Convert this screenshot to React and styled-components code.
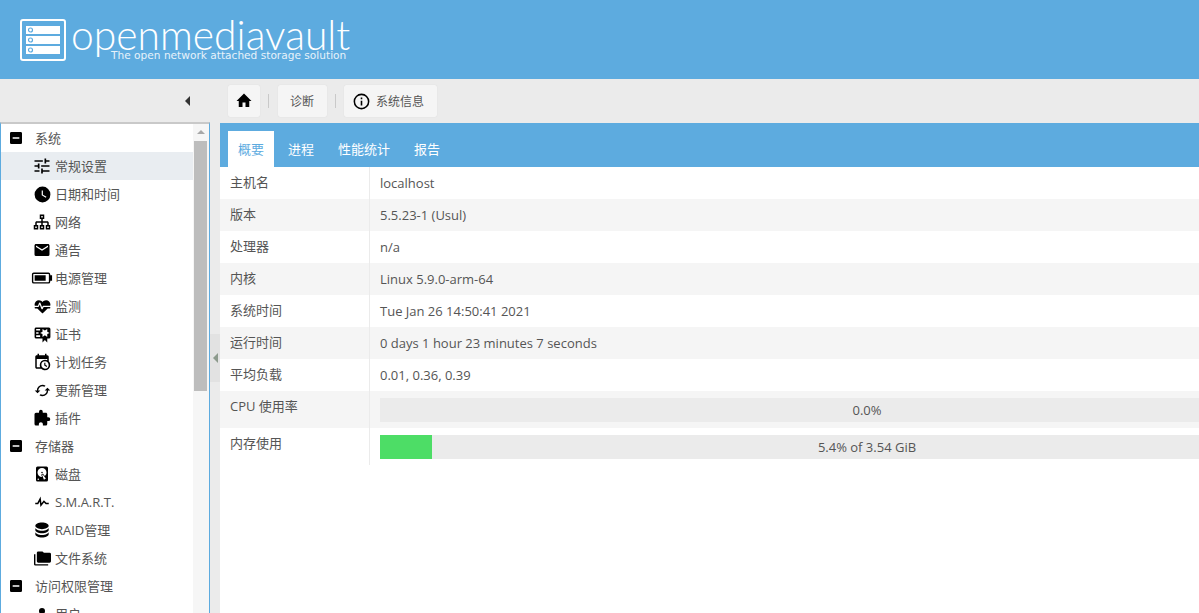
import React from 'react';
import styled, { createGlobalStyle } from 'styled-components';

const ICONS = {
  minusBox: 'M17,13H7V11H17M19,3H5C3.89,3 3,3.89 3,5V19A2,2 0 0,0 5,21H19A2,2 0 0,0 21,19V5C21,3.89 20.1,3 19,3Z',
  tune: 'M3,17V19H9V17H3M3,5V7H13V5H3M13,21V19H21V17H13V15H11V21H13M7,9V11H3V13H7V15H9V9H7M21,13V11H11V13H21M15,9H17V7H21V5H17V3H15V9Z',
  clock: 'M12,2A10,10 0 0,0 2,12A10,10 0 0,0 12,22A10,10 0 0,0 22,12A10,10 0 0,0 12,2M16.2,16.2L11,13V7H12.5V12.2L17,14.9L16.2,16.2Z',
  lan: 'M9,2V8H11V11H5C3.9,11 3,11.9 3,13V16H1V22H7V16H5V13H11V16H9V22H15V16H13V13H19V16H17V22H23V16H21V13C21,11.9 20.1,11 19,11H13V8H15V2H9M11,4H13V6H11V4M3,18H5V20H3V18M11,18H13V20H11V18M19,18H21V20H19V18Z',
  email: 'M20,8L12,13L4,8V6L12,11L20,6M20,4H4C2.89,4 2,4.89 2,6V18A2,2 0 0,0 4,20H20A2,2 0 0,0 22,18V6C22,4.89 21.1,4 20,4Z',
  battery: 'M3,6H19A2,2 0 0,1 21,8V9H23V15H21V16A2,2 0 0,1 19,18H3A2,2 0 0,1 1,16V8A2,2 0 0,1 3,6M3,7.5A0.5,0.5 0 0,0 2.5,8V16A0.5,0.5 0 0,0 3,16.5H19A0.5,0.5 0 0,0 19.5,16V8A0.5,0.5 0 0,0 19,7.5H3M4,9H16V15H4V9Z',
  heartPulse: 'M7.5,4A5.5,5.5 0 0,0 2,9.5C2,10 2.09,10.5 2.22,11H6.3L7.57,7.63C7.87,6.83 9.05,6.75 9.43,7.63L11.5,13L12.09,11.58C12.22,11.25 12.57,11 13,11H21.78C21.91,10.5 22,10 22,9.5A5.5,5.5 0 0,0 16.5,4C14.64,4 13,4.93 12,6.34C11,4.93 9.36,4 7.5,4V4M3,12.5A1,1 0 0,0 2,13.5A1,1 0 0,0 3,14.5H5.44L11,20C12,20.9 12,20.9 13,20L18.56,14.5H21A1,1 0 0,0 22,13.5A1,1 0 0,0 21,12.5H13.4L12.47,14.8C12.07,15.81 10.92,15.67 10.55,14.83L8.5,9.5L7.54,11.83C7.39,12.27 7.05,12.5 6.5,12.5H3Z',
  certificate: 'M4,3C2.89,3 2,3.89 2,5V15A2,2 0 0,0 4,17H12V22L15,19L18,22V17H20A2,2 0 0,0 22,15V8L22,6V5A2,2 0 0,0 20,3H16V3H4M12,5L15,7L18,5V8.5L21,10L18,11.5V15L15,13L12,15V11.5L9,10L12,8.5V5M4,5H9V7H4V5M4,9H7V11H4V9M4,13H9V15H4V13Z',
  calendarClock: 'M15,13H16.5V15.82L18.94,17.23L18.19,18.53L15,16.69V13M19,8H5V19H9.67C9.24,18.09 9,17.07 9,16A7,7 0 0,1 16,9C17.07,9 18.09,9.24 19,9.67V8M5,21C3.89,21 3,20.1 3,19V5C3,3.89 3.89,3 5,3H6V1H8V3H16V1H18V3H19A2,2 0 0,1 21,5V11.1C22.24,12.36 23,14.09 23,16A7,7 0 0,1 16,23C14.09,23 12.36,22.24 11.1,21H5M16,11.15A4.85,4.85 0 0,0 11.15,16C11.15,18.68 13.32,20.85 16,20.85A4.85,4.85 0 0,0 20.85,16C20.85,13.32 18.68,11.15 16,11.15Z',
  cached: 'M19,8L15,12H18A6,6 0 0,1 12,18C11,18 10.03,17.75 9.2,17.3L7.74,18.76C8.97,19.54 10.43,20 12,20A8,8 0 0,0 20,12H23M6,12A6,6 0 0,1 12,6C13,6 13.97,6.25 14.8,6.7L16.26,5.24C15.03,4.46 13.57,4 12,4A8,8 0 0,0 4,12H1L5,16L9,12',
  puzzle: 'M20.5,11H19V7C19,5.89 18.1,5 17,5H13V3.5A2.5,2.5 0 0,0 10.5,1A2.5,2.5 0 0,0 8,3.5V5H4A2,2 0 0,0 2,7V20A2,2 0 0,0 4,22H7.8V20.5C7.8,19 9,17.8 10.5,17.8C12,17.8 13.2,19 13.2,20.5V22H17A2,2 0 0,0 19,20V16H20.5A2.5,2.5 0 0,0 23,13.5A2.5,2.5 0 0,0 20.5,11Z',
  harddisk: 'M6,2H18A2,2 0 0,1 20,4V20A2,2 0 0,1 18,22H6A2,2 0 0,1 4,20V4A2,2 0 0,1 6,2M12,4A6,6 0 0,0 6,10C6,13.31 8.69,16 12.1,16L11.22,13.77C10.95,13.29 11.11,12.68 11.59,12.4L12.45,11.9C12.93,11.63 13.54,11.79 13.82,12.27L15.74,14.69C17.12,13.59 18,11.9 18,10A6,6 0 0,0 12,4M12,9A1,1 0 0,1 13,10A1,1 0 0,1 12,11A1,1 0 0,1 11,10A1,1 0 0,1 12,9M7,18A1,1 0 0,0 6,19A1,1 0 0,0 7,20A1,1 0 0,0 8,19A1,1 0 0,0 7,18M12.09,13.27L14.58,19.58L17.17,18.08L12.95,12.77L12.09,13.27Z',
  pulse: 'M3,13H5.79L10.1,4.79L11.28,13.75L14.5,9.66L17.83,13H21V15H17L14.67,12.67L9.92,18.73L8.94,11.31L7,15H3V13Z',
  database: 'M12,3C7.58,3 4,4.79 4,7C4,9.21 7.58,11 12,11C16.42,11 20,9.21 20,7C20,4.79 16.42,3 12,3M4,9V12C4,14.21 7.58,16 12,16C16.42,16 20,14.21 20,12V9C20,11.21 16.42,13 12,13C7.58,13 4,11.21 4,9M4,14V17C4,19.21 7.58,21 12,21C16.42,21 20,19.21 20,17V14C20,16.21 16.42,18 12,18C7.58,18 4,16.21 4,14Z',
  folders: 'M22,4H14L12,2H6A2,2 0 0,0 4,4V16A2,2 0 0,0 6,18H22A2,2 0 0,0 24,16V6A2,2 0 0,0 22,4M2,6H0V20A2,2 0 0,0 2,22H20V20H2V6Z',
  account: 'M12,4A4,4 0 0,1 16,8A4,4 0 0,1 12,12A4,4 0 0,1 8,8A4,4 0 0,1 12,4M12,14C16.42,14 20,15.79 20,18V20H4V18C4,15.79 7.58,14 12,14Z',
  home: 'M10,20V14H14V20H19V12H22L12,2L2,12H5V20H10Z',
  info: 'M11,9H13V7H11M12,20C7.59,20 4,16.41 4,12C4,7.59 7.59,4 12,4C16.41,4 20,7.59 20,12C20,16.41 16.41,20 12,20M12,2A10,10 0 0,0 2,12A10,10 0 0,0 12,22A10,10 0 0,0 22,12A10,10 0 0,0 12,2M11,17H13V11H11V17Z',
};

const NAV = [
  { type: 'group', label: '系统' },
  { icon: 'tune', label: '常规设置', size: 20, active: true },
  { icon: 'clock', label: '日期和时间', size: 19 },
  { icon: 'lan', label: '网络', size: 18 },
  { icon: 'email', label: '通告', size: 18 },
  { icon: 'battery', label: '电源管理', size: 22 },
  { icon: 'heartPulse', label: '监测', size: 19 },
  { icon: 'certificate', label: '证书', size: 19 },
  { icon: 'calendarClock', label: '计划任务', size: 18 },
  { icon: 'cached', label: '更新管理', size: 17 },
  { icon: 'puzzle', label: '插件', size: 18 },
  { type: 'group', label: '存储器' },
  { icon: 'harddisk', label: '磁盘', size: 18 },
  { icon: 'pulse', label: 'S.M.A.R.T.', size: 18 },
  { icon: 'database', label: 'RAID管理', size: 20 },
  { icon: 'folders', label: '文件系统', size: 17 },
  { type: 'group', label: '访问权限管理' },
  { icon: 'account', label: '用户', size: 18 },
];

const INFO_ROWS = [
  ['主机名', 'localhost'],
  ['版本', '5.5.23-1 (Usul)'],
  ['处理器', 'n/a'],
  ['内核', 'Linux 5.9.0-arm-64'],
  ['系统时间', 'Tue Jan 26 14:50:41 2021'],
  ['运行时间', '0 days 1 hour 23 minutes 7 seconds'],
  ['平均负载', '0.01, 0.36, 0.39'],
];

const TABS = ['概要', '进程', '性能统计', '报告'];

const GlobalStyle = createGlobalStyle`
  html, body {
    margin: 0;
    padding: 0;
    height: 100%;
    overflow: hidden;
  }
  body {
    font-family: "Open Sans", "Noto Sans CJK SC", sans-serif;
    font-size: 13px;
    color: #555;
    background: #ebebeb;
  }
`;

const Page = styled.div`
  display: flex;
  flex-direction: column;
  height: 613px;
  overflow: hidden;
`;

const Header = styled.header`
  display: flex;
  align-items: flex-start;
  gap: 5px;
  height: 79px;
  flex: none;
  padding: 19px 0 0 20px;
  box-sizing: border-box;
  background: #5dabdf;
  color: #fff;
`;

const Brand = styled.div`
  display: flex;
  flex-direction: column;
  width: 290px;
`;

const BrandName = styled.div`
  font-family: "Lato", sans-serif;
  font-weight: 300;
  font-size: 40.8px;
  line-height: 32px;
  height: 30px;
`;

const BrandTag = styled.div`
  font-family: "DejaVu Sans", sans-serif;
  font-size: 10.6px;
  line-height: 12px;
  margin-left: 40px;
  opacity: 0.85;
`;

const Toolbar = styled.div`
  display: flex;
  align-items: center;
  height: 44px;
  flex: none;
`;

const CollapseSlot = styled.div`
  display: flex;
  justify-content: flex-end;
  width: 228px;
  padding-right: 38px;
  box-sizing: border-box;
`;

const ToolButton = styled.div`
  display: flex;
  align-items: center;
  justify-content: center;
  gap: 5px;
  width: ${(p) => p.$width}px;
  height: 32px;
  padding-right: ${(p) => p.$shift || 0}px;
  box-sizing: border-box;
  background: #f5f5f5;
  border-radius: 2px;
  box-shadow: 0 0 1px rgba(0, 0, 0, 0.12);
  font-size: 12px;
`;

const ToolSep = styled.div`
  width: 1px;
  height: 14px;
  margin: 0 ${(p) => p.$right}px 0 8px;
  background: #c9c9c9;
`;

const Body = styled.div`
  display: flex;
  flex: 1;
  min-height: 0;
`;

const Sidebar = styled.aside`
  display: flex;
  width: 210px;
  flex: none;
  margin-top: -1px;
  box-sizing: border-box;
  background: #fff;
  border-left: 1px solid #5dabdf;
  border-right: 1px solid #5dabdf;
  border-top: 2px solid #c9c9c9;
  overflow: hidden;
`;

const NavList = styled.div`
  flex: 1;
  min-width: 0;
`;

const NavRow = styled.div`
  display: flex;
  align-items: center;
  height: 28px;
  padding: 0 0 0 ${(p) => (p.$group ? 7 : 31)}px;
  background: ${(p) => (p.$active ? '#e9edf1' : 'transparent')};
  white-space: nowrap;
`;

const NavIconSlot = styled.span`
  display: flex;
  align-items: center;
  justify-content: center;
  width: ${(p) => (p.$group ? 16 : 20)}px;
  flex: none;
  margin-right: ${(p) => (p.$group ? 11 : 3)}px;
`;

const NavLabel = styled.span`
  line-height: 28px;
`;

const Scrollbar = styled.div`
  display: flex;
  flex-direction: column;
  align-items: center;
  width: 16px;
  flex: none;
  background: #f6f6f6;
`;

const ScrollArrow = styled.div`
  width: 0;
  height: 0;
  margin: 6px 0 7px;
  border-left: 4px solid transparent;
  border-right: 4px solid transparent;
  border-bottom: 4px solid #a8a8a8;
`;

const ScrollThumb = styled.div`
  width: 13px;
  height: 250px;
  margin-left: -1px;
  background: #bdbdbd;
`;

const Splitter = styled.div`
  display: flex;
  align-items: center;
  width: 10px;
  flex: none;
  padding-bottom: 20px;
  box-sizing: border-box;
`;

const SplitHandle = styled.div`
  display: flex;
  align-items: center;
  justify-content: center;
  width: 10px;
  height: 48px;
  background: #e2e2e2;
`;

const TriangleLeft = styled.div`
  width: 0;
  height: 0;
  border-top: ${(p) => p.$h}px solid transparent;
  border-bottom: ${(p) => p.$h}px solid transparent;
  border-right: ${(p) => p.$w}px solid ${(p) => p.$color};
`;

const Main = styled.main`
  flex: 1;
  min-width: 0;
  background: #fff;
  overflow: hidden;
`;

const TabBar = styled.div`
  display: flex;
  gap: 4px;
  height: 44px;
  padding: 8px 0 0 8px;
  box-sizing: border-box;
  background: #5dabdf;
`;

const Tab = styled.div`
  height: 36px;
  padding: 0 10px;
  line-height: 36px;
  color: ${(p) => (p.$active ? '#5dabdf' : '#fff')};
  background: ${(p) => (p.$active ? '#fff' : 'transparent')};
`;

const InfoRow = styled.div`
  display: flex;
  background: ${(p) => (p.$odd ? '#f5f5f5' : '#fff')};
`;

const InfoLabel = styled.div`
  width: 150px;
  flex: none;
  box-sizing: border-box;
  padding-left: 10px;
  line-height: 30px;
  border-right: 1px solid #ebebeb;
`;

const InfoValue = styled.div`
  flex: 1;
  min-width: 0;
  padding-left: 10px;
  line-height: 32px;
`;

const BarCell = styled.div`
  flex: 1;
  min-width: 0;
  padding: 7px 0 6px 10px;
`;

const Bar = styled.div`
  position: relative;
  width: 974px;
  height: 24px;
  background: #ebebeb;
  line-height: 24px;
  text-align: center;
`;

const BarFill = styled.div`
  position: absolute;
  left: 0;
  top: 0;
  bottom: 0;
  background: #4ddd66;
`;

const BarText = styled.span`
  position: relative;
`;

const IconSvg = styled.svg`
  flex: none;
`;

const Icon = ({ name, size = 16, color = '#000' }) => (
  <IconSvg width={size} height={size} viewBox="0 0 24 24" fill={color}>
    <path d={ICONS[name]} />
  </IconSvg>
);

const Logo = () => (
  <IconSvg width="46" height="42" viewBox="0 0 46 42">
    <rect x="1" y="1" width="44" height="40" rx="2" fill="none" stroke="#fff" strokeWidth="2" />
    {[7, 17, 27].map((y) => (
      <g key={y}>
        <rect x="6" y={y} width="34" height="8" fill="#fff" />
        <circle cx="10.5" cy={y + 4} r="2" fill="none" stroke="#5dabdf" strokeWidth="1.2" />
      </g>
    ))}
  </IconSvg>
);

const ProgressRow = ({ label, percent, text, odd }) => (
  <InfoRow $odd={odd}>
    <InfoLabel>{label}</InfoLabel>
    <BarCell>
      <Bar>
        <BarFill style={{ width: `${percent}%` }} />
        <BarText>{text}</BarText>
      </Bar>
    </BarCell>
  </InfoRow>
);

export default function App() {
  return (
    <Page>
      <GlobalStyle />
      <Header>
        <Logo />
        <Brand>
          <BrandName>openmediavault</BrandName>
          <BrandTag>The open network attached storage solution</BrandTag>
        </Brand>
      </Header>

      <Toolbar>
        <CollapseSlot>
          <TriangleLeft $h={5} $w={5} $color="#333" />
        </CollapseSlot>
        <ToolButton $width={32}>
          <Icon name="home" size={18} />
        </ToolButton>
        <ToolSep $right={9} />
        <ToolButton $width={49} $shift={1}>诊断</ToolButton>
        <ToolSep $right={8} />
        <ToolButton $width={93} $shift={5}>
          <Icon name="info" size={19} />
          系统信息
        </ToolButton>
      </Toolbar>

      <Body>
        <Sidebar>
          <NavList>
            {NAV.map((item) => {
              const group = item.type === 'group';
              return (
                <NavRow key={item.label} $group={group} $active={item.active}>
                  <NavIconSlot $group={group}>
                    <Icon name={group ? 'minusBox' : item.icon} size={group ? 16 : item.size} />
                  </NavIconSlot>
                  <NavLabel>{item.label}</NavLabel>
                </NavRow>
              );
            })}
          </NavList>
          <Scrollbar>
            <ScrollArrow />
            <ScrollThumb />
          </Scrollbar>
        </Sidebar>

        <Splitter>
          <SplitHandle>
            <TriangleLeft $h={5} $w={5} $color="#8c9a8c" />
          </SplitHandle>
        </Splitter>

        <Main>
          <TabBar>
            {TABS.map((tab, i) => (
              <Tab key={tab} $active={i === 0}>{tab}</Tab>
            ))}
          </TabBar>
          {INFO_ROWS.map(([label, value], i) => (
            <InfoRow key={label} $odd={i % 2 === 1}>
              <InfoLabel>{label}</InfoLabel>
              <InfoValue>{value}</InfoValue>
            </InfoRow>
          ))}
          <ProgressRow label="CPU 使用率" percent={0} text="0.0%" odd />
          <ProgressRow label="内存使用" percent={5.34} text="5.4% of 3.54 GiB" />
        </Main>
      </Body>
    </Page>
  );
}
